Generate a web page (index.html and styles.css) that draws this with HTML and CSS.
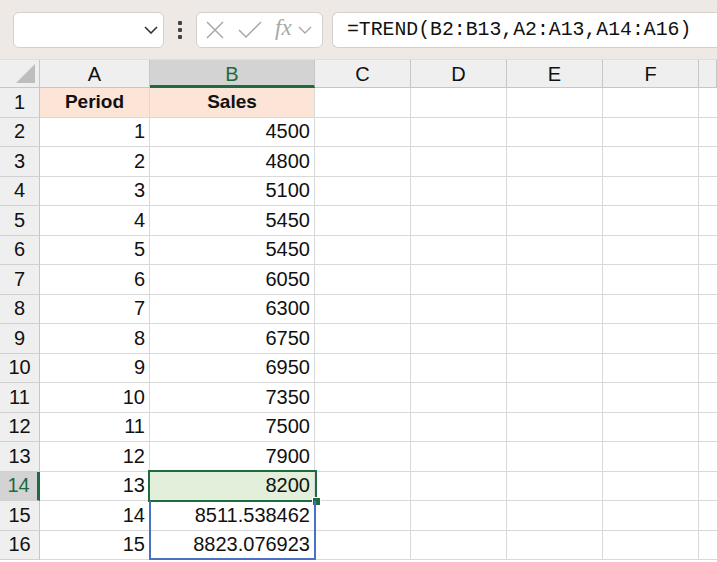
FILE: index.html
```html
<!DOCTYPE html>
<html lang="en">
<head>
    <meta charset="UTF-8">
    <meta name="viewport" content="width=device-width, initial-scale=1.0">
    <title>TREND</title>
    <link rel="stylesheet" href="styles.css">
</head>
<body>
    <div class="toolbar">
        <div class="name-box">
            <svg class="chevron" width="14" height="8" viewBox="0 0 14 8"><path d="M1 1 L7 7 L13 1" fill="none" stroke="#333" stroke-width="1.6"/></svg>
        </div>
        <div class="dots"><span></span><span></span><span></span></div>
        <div class="fx-box">
            <svg width="20" height="20" viewBox="0 0 20 20"><path d="M2 2 L18 18 M18 2 L2 18" stroke="#a8a8a8" stroke-width="1.5"/></svg>
            <svg width="24" height="18" viewBox="0 0 24 18"><path d="M1 9 L8 16 L23 1" fill="none" stroke="#a8a8a8" stroke-width="1.5"/></svg>
            <span class="fx">fx</span>
            <svg width="14" height="8" viewBox="0 0 14 8"><path d="M1 1 L7 7 L13 1" fill="none" stroke="#a8a8a8" stroke-width="1.4"/></svg>
        </div>
        <div class="formula">=TREND(B2:B13,A2:A13,A14:A16)</div>
    </div>

    <div class="sheet" id="sheet">
        <div class="corner"><span class="tri"></span></div>
        <div class="col-hdr">A</div>
        <div class="col-hdr selected">B</div>
        <div class="col-hdr">C</div>
        <div class="col-hdr">D</div>
        <div class="col-hdr">E</div>
        <div class="col-hdr">F</div>
        <div class="col-hdr last"></div>
    </div>

    <script>
        const periods = [1,2,3,4,5,6,7,8,9,10,11,12,13,14,15];
        const sales = ['4500','4800','5100','5450','5450','6050','6300','6750','6950','7350','7500','7900','8200','8511.538462','8823.076923'];
        const sheet = document.getElementById('sheet');

        function cell(cls, text) {
            const d = document.createElement('div');
            d.className = cls;
            d.textContent = text || '';
            sheet.appendChild(d);
        }

        // header row
        cell('row-hdr', '1');
        cell('cell head', 'Period');
        cell('cell head', 'Sales');
        for (let i = 0; i < 4; i++) cell('cell');
        cell('cell last');

        for (let r = 0; r < periods.length; r++) {
            const active = r === 12;
            cell(active ? 'row-hdr selected' : 'row-hdr', String(r + 2));
            cell('cell num', String(periods[r]));
            cell(active ? 'cell num active' : 'cell num', sales[r]);
            for (let i = 0; i < 4; i++) cell('cell');
            cell('cell last');
        }

        const box = document.createElement('div');
        box.className = 'active-box';
        box.innerHTML = '<span class="handle"></span>';
        sheet.appendChild(box);
        const range = document.createElement('div');
        range.className = 'range-box';
        sheet.appendChild(range);
    </script>
</body>
</html>
```

FILE: styles.css
```css
body {
    margin: 0;
    background-color: #fff;
    font-family: "Liberation Sans", Arial, sans-serif;
    overflow: hidden;
}
.toolbar {
    height: 60px;
    background-color: #efe9e6;
    display: flex;
    align-items: center;
    padding-left: 13px;
    box-sizing: border-box;
    border-bottom: 1px solid #e2dcd9;
}
.name-box {
    width: 151px;
    height: 36px;
    background-color: #fff;
    border: 1px solid #d6d0cd;
    border-radius: 6px;
    box-sizing: border-box;
    display: flex;
    align-items: center;
    justify-content: flex-end;
    padding-right: 5px;
}
.dots {
    width: 32px;
    display: flex;
    flex-direction: column;
    align-items: center;
    gap: 3px;
}
.dots span {
    width: 4px;
    height: 4px;
    background-color: #444;
    border-radius: 1px;
}
.fx-box {
    width: 127px;
    height: 36px;
    background-color: #fff;
    border: 1px solid #d6d0cd;
    border-radius: 6px;
    box-sizing: border-box;
    display: flex;
    align-items: center;
    padding-left: 8px;
}
.fx-box svg:nth-child(1) { margin-right: 13px; }
.fx-box svg:nth-child(2) { margin-right: 13px; }
.fx {
    font-family: "Liberation Serif", serif;
    font-style: italic;
    font-size: 23px;
    color: #a8a8a8;
    margin-right: 6px;
    margin-top: -3px;
}
.formula {
    flex: 1;
    height: 36px;
    margin-left: 9px;
    background-color: #fff;
    border: 1px solid #d6d0cd;
    border-right: none;
    border-radius: 6px 0 0 6px;
    box-sizing: border-box;
    font-family: "Liberation Mono", monospace;
    font-size: 19.8px;
    color: #111;
    display: flex;
    align-items: center;
    padding-left: 14px;
}
.sheet {
    position: relative;
    display: grid;
    grid-template-columns: 40px 110px 165px 96px 96px 96px 96px 18px;
    grid-template-rows: 28px repeat(16, 29.5px);
    font-size: 20px;
    color: #111;
}
.corner {
    background-color: #efefef;
    border-right: 1px solid #c6c6c6;
    border-bottom: 1px solid #c6c6c6;
    position: relative;
}
.corner .tri {
    position: absolute;
    right: 4px;
    bottom: 4px;
    width: 0;
    height: 0;
    border-left: 19px solid transparent;
    border-bottom: 19px solid #bdbdbd;
}
.col-hdr {
    background-color: #efefef;
    border-right: 1px solid #c6c6c6;
    border-bottom: 1px solid #c6c6c6;
    display: flex;
    align-items: center;
    justify-content: center;
    padding-top: 2px;
}
.col-hdr.selected {
    background-color: #d3d3d3;
    color: #1e6b41;
    border-bottom: 3px solid #1e6b41;
    padding-top: 4px;
}
.row-hdr {
    background-color: #efefef;
    border-right: 1px solid #c6c6c6;
    border-bottom: 1px solid #d0d0d0;
    display: flex;
    align-items: center;
    justify-content: center;
}
.row-hdr.selected {
    background-color: #d3d3d3;
    color: #1e6b41;
    border-right: 3px solid #1e6b41;
}
.cell {
    border-right: 1px solid #d9d9d9;
    border-bottom: 1px solid #d9d9d9;
    display: flex;
    align-items: center;
    padding: 0 4px;
    min-width: 0;
}
.cell.last {
    border-right: none;
}
.cell.head {
    background-color: #fce4d6;
    font-weight: bold;
    font-size: 19px;
    justify-content: center;
}
.cell.num {
    justify-content: flex-end;
}
.cell.active {
    background-color: #e2efda;
}
.active-box {
    position: absolute;
    left: 148px;
    top: 409.5px;
    width: 169px;
    height: 32px;
    border: 2px solid #1e6b41;
    box-sizing: border-box;
}
.handle {
    position: absolute;
    right: -6px;
    bottom: -6px;
    width: 7px;
    height: 7px;
    background-color: #1e6b41;
    border: 1px solid #fff;
}
.range-box {
    position: absolute;
    left: 149px;
    top: 441px;
    width: 167px;
    height: 59px;
    border: 2px solid #4a72c2;
    border-top: none;
    box-sizing: border-box;
}
```
